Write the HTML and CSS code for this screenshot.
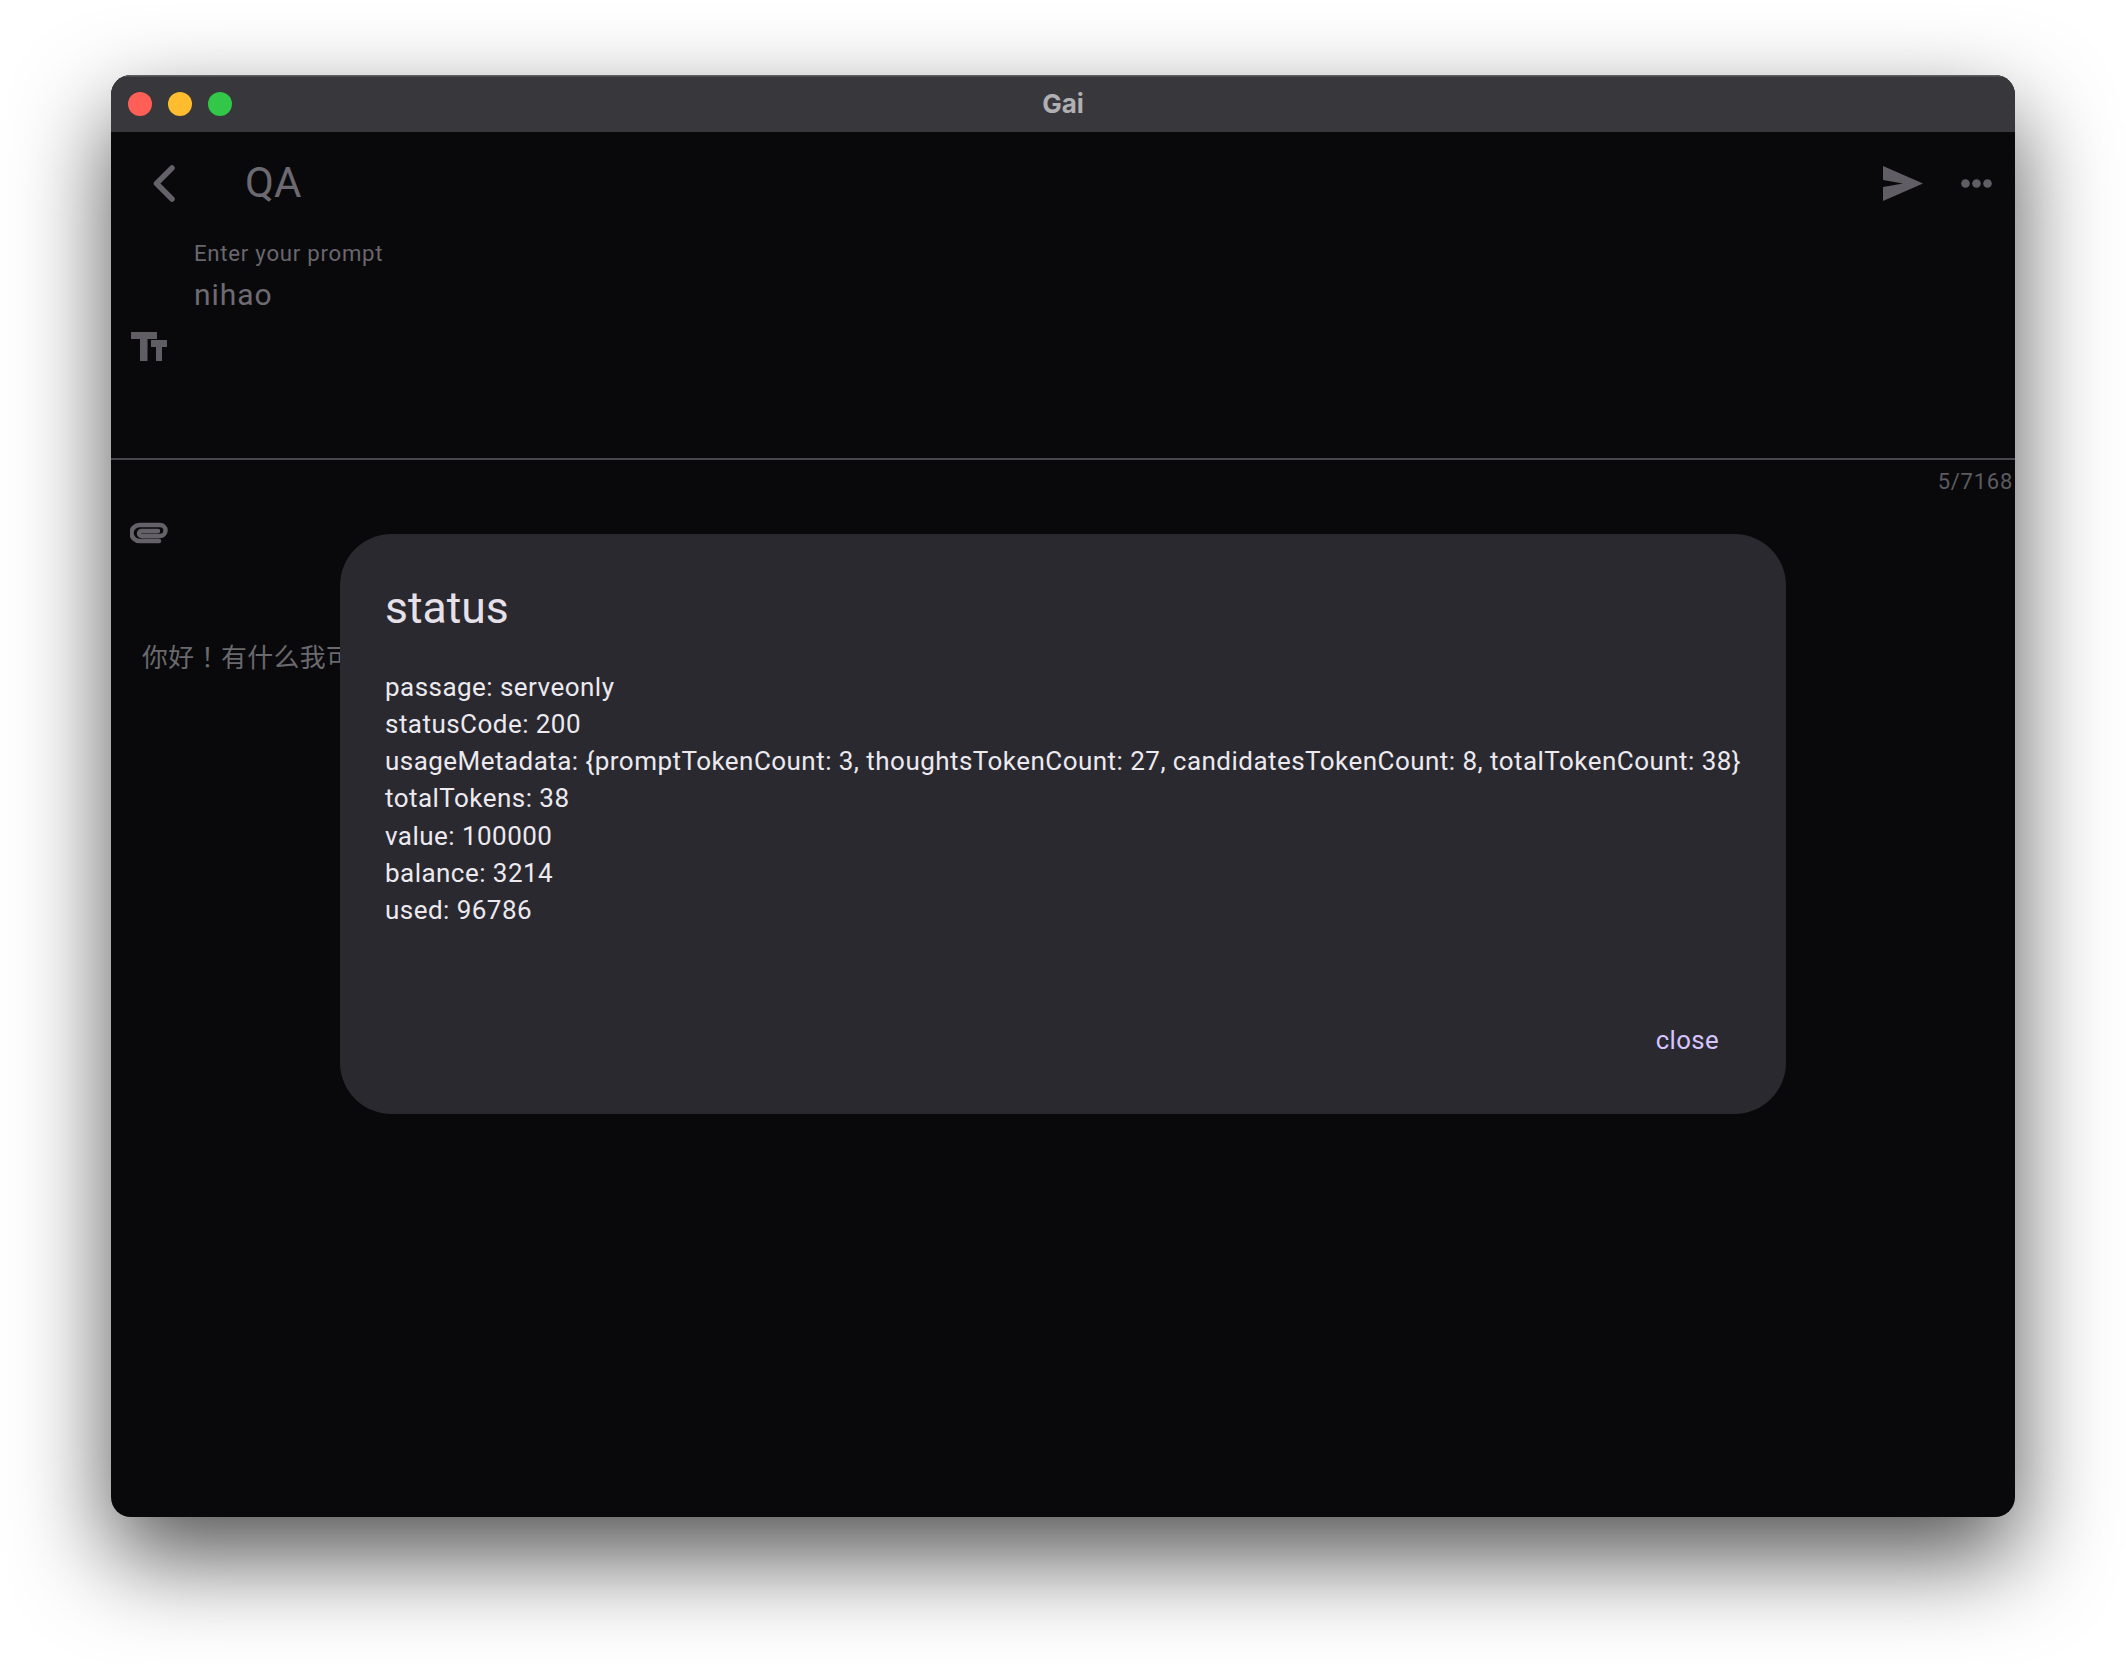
FILE: index.html
```html
<!DOCTYPE html>
<html lang="en">
<head>
<meta charset="utf-8">
<title>Gai</title>
<link rel="stylesheet" href="styles.css">
</head>
<body>
<div class="window">
  <header class="titlebar">
    <div class="lights">
      <span class="light red"></span>
      <span class="light yellow"></span>
      <span class="light green"></span>
    </div>
    <div class="wintitle">Gai</div>
    <div></div>
  </header>
  <main class="app">
    <div class="appbar">
      <svg class="back" viewBox="0 0 22 37"><path d="M19 3 L3.5 18.5 L19 34"/></svg>
      <h1 class="apptitle">QA</h1>
      <svg class="send" viewBox="0 0 40 35"><path d="M0 0 L40 17.500 L0 35 L0 21 L20 17.500 L0 14 Z"/></svg>
      <svg class="more" viewBox="0 0 31 9"><circle cx="4.500" cy="4.500" r="4.300"/><circle cx="15.500" cy="4.500" r="4.300"/><circle cx="26.500" cy="4.500" r="4.300"/></svg>
    </div>
    <div class="prompt">
      <svg class="tt" viewBox="0 0 36 29"><path d="M0 0 H26 V7 H16.500 V29 H9 V7 H0 Z"/><path d="M20 8 H36 V15 H31 V29 H25 V15 H20 Z"/></svg>
      <div class="field">
        <div class="label">Enter your prompt</div>
        <div class="value">nihao</div>
      </div>
    </div>
    <div class="counter">5/7168</div>
    <svg class="clip" viewBox="0 0 38 22"><path d="M29 19 H9.500 A7.750 7.750 0 0 1 9.500 3 H30 A5.500 5.500 0 0 1 30 14 H11.500 A2.500 2.500 0 0 1 11.500 9 H28"/></svg>
    <p class="answer">你好<span class="punct">！</span>有什么我可以帮你的吗<span class="punct">？</span></p>
    <section class="dialog">
      <h2 class="dialog-title">status</h2>
      <div class="dialog-body">
        <div>passage: serveonly</div>
        <div>statusCode: 200</div>
        <div>usageMetadata: {promptTokenCount: 3, thoughtsTokenCount: 27, candidatesTokenCount: 8, totalTokenCount: 38}</div>
        <div>totalTokens: 38</div>
        <div>value: 100000</div>
        <div>balance: 3214</div>
        <div>used: 96786</div>
      </div>
      <div class="dialog-actions"><button class="close" type="button">close</button></div>
    </section>
  </main>
</div>
</body>
</html>
```

FILE: styles.css
```css
* { box-sizing: border-box; }
html, body { margin: 0; height: 100%; }
body {
  background: #fff;
  font-family: Roboto, "Noto Sans CJK SC", sans-serif;
  overflow: hidden;
}
.window {
  width: 1904px;
  height: 1442px;
  margin: 75px 0 0 111px;
  border-radius: 20px;
  background: #09090c;
  box-shadow: 0 40px 95px rgba(0, 0, 0, .68);
  display: flex;
  flex-direction: column;
  overflow: hidden;
}
.titlebar {
  height: 57px;
  flex: none;
  background: #38373c;
  box-shadow: inset 0 1.5px 0 #5f5e62;
  display: grid;
  grid-template-columns: 1fr auto 1fr;
  align-items: center;
  padding: 0 17px;
}
.lights { display: flex; gap: 16px; }
.light { width: 24px; height: 24px; border-radius: 50%; }
.red { background: #ff5f57; }
.yellow { background: #febc2e; }
.green { background: #32c748; }
.wintitle {
  font-family: Inter, "Liberation Sans", sans-serif;
  font-weight: 700;
  font-size: 26px;
  color: #b0afb2;
}
.app { position: relative; flex: 1; display: flex; flex-direction: column; align-items: flex-start; }
.appbar {
  width: 100%;
  height: 104px;
  flex: none;
  display: flex;
  align-items: center;
  padding: 0 23px 2px 42px;
}
.back { width: 22px; height: 37px; fill: none; stroke: #646268; stroke-width: 5.500; stroke-linecap: round; stroke-linejoin: round; }
.apptitle {
  margin: 0 auto 0 70px;
  font-size: 42px;
  line-height: 52px;
  font-weight: 400;
  color: #6c6a70;
}
.send { width: 40px; height: 35px; fill: #605e64; }
.more { width: 31px; height: 9px; margin-left: 38px; fill: #605e64; }
.prompt {
  width: 100%;
  height: 223.500px;
  flex: none;
  display: flex;
  align-items: flex-start;
  border-bottom: 2px solid #48474c;
  padding-left: 20px;
}
.tt { width: 36px; height: 29px; margin-top: 96px; margin-right: 27px; fill: #605e64; flex: none; }
.field { padding-top: 1px; }
.label { font-size: 22.200px; line-height: 32px; letter-spacing: .74px; color: #69676d; }
.value { font-size: 30px; line-height: 44px; letter-spacing: .92px; margin-top: 3.500px; color: #6e6c72; }
.counter {
  width: 100%;
  text-align: right;
  height: 46.500px;
  line-height: 44px;
  padding-top: .5px;
  padding-right: 2px;
  font-size: 22px;
  letter-spacing: .74px;
  color: #5c5b60;
}
.clip { width: 38px; height: 22px; margin: 16px 0 0 19px; fill: none; stroke: #646268; stroke-width: 4.500; stroke-linecap: round; flex: none; }
.answer {
  margin: 93px 0 0 31px;
  width: 198px;
  overflow: hidden;
  font-size: 25.800px;
  line-height: 37px;
  letter-spacing: .5px;
  color: #6a696d;
  white-space: nowrap;
}
.punct { font-family: "Noto Sans CJK TC", sans-serif; }
.dialog {
  position: absolute;
  left: 229px;
  top: 402px;
  width: 1446px;
  height: 580px;
  border-radius: 51.500px;
  background: #2a292f;
  padding: 45px 45px 0;
  display: flex;
  flex-direction: column;
}
.dialog-title { margin: 0; font-size: 44.500px; line-height: 59px; font-weight: 400; color: #e6e1e9; }
.dialog-body {
  margin-top: 30.500px;
  font-size: 26px;
  line-height: 37.250px;
  letter-spacing: .46px;
  color: #ecE9ef;
  white-space: nowrap;
}
.dialog-actions { display: flex; justify-content: flex-end; margin-top: auto; padding-bottom: 55px; }
.close {
  border: 0;
  background: none;
  padding: 0 22px;
  font: 450 25.800px/38px Roboto, sans-serif;
  letter-spacing: .35px;
  color: #d6c4ff;
}
```
